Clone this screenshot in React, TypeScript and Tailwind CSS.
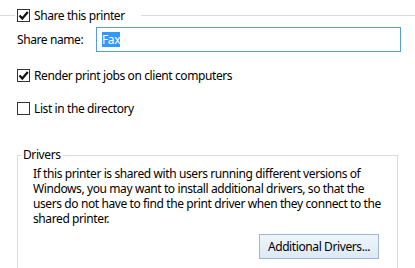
const FONT = "font-['Noto_Sans',sans-serif] tracking-[-0.4px]";

function Box({ checked }: { checked?: boolean }) {
  return (
    <span className="flex h-[13px] w-[13px] shrink-0 items-center justify-center border border-[#333333] bg-white">
      {checked && (
        <svg viewBox="0 0 11 11" className="h-[11px] w-[11px]">
          <polyline points="1.5,5.5 4.3,8.5 9.8,2" fill="none" stroke="#111" strokeWidth="2.2" />
        </svg>
      )}
    </span>
  );
}

export default function App() {
  return (
    <div className={`h-[268px] w-[415px] overflow-hidden bg-white text-[12px] leading-[15px] text-black ${FONT}`}>
      {/* share header */}
      <div className="mt-[8px] flex h-[14px] items-center">
        <div className="h-px w-[15px] bg-[#dcdcdc]" />
        <div className="ml-[2px] flex items-center gap-[4px]">
          <Box checked />
          <span>Share this printer</span>
        </div>
        <div className="ml-[16px] h-px flex-1 bg-[#dcdcdc]" />
      </div>

      <div className="mt-[5px] flex h-[25px] items-center pl-[17px]">
        <span className="w-[79px]">Share name:</span>
        <div className="flex h-[25px] w-[305px] items-center border border-[#569de5] bg-white pl-[5px]">
          <span className="bg-[#3399ff] text-white">Fax</span>
        </div>
      </div>

      <label className="mt-[17px] flex h-[13px] items-center gap-[4px] pl-[17px]">
        <Box checked />
        <span>Render print jobs on client computers</span>
      </label>

      <label className="mt-[20px] flex h-[13px] items-center gap-[4px] pl-[17px]">
        <Box />
        <span>List in the directory</span>
      </label>

      <fieldset className="ml-[17px] mt-[32px] h-[140px] w-[381px] border border-[#dcdcdc]">
        <legend className="ml-[3px] px-[2px] leading-[16px]">Drivers</legend>
        <p className="mt-[3px] whitespace-nowrap pl-[15px]">
          If this printer is shared with users running different versions of
          <br />
          Windows, you may want to install additional drivers, so that the
          <br />
          users do not have to find the print driver when they connect to the
          <br />
          shared printer.
        </p>
        <div className="mt-[8px] flex justify-end pr-[18px]">
          <button
            type="button"
            className="h-[25px] w-[120px] border border-[#9db8d6] bg-gradient-to-b from-[#eef5fc] to-[#dde9f6] text-[12px]"
          >
            Additional Drivers...
          </button>
        </div>
      </fieldset>
    </div>
  );
}
